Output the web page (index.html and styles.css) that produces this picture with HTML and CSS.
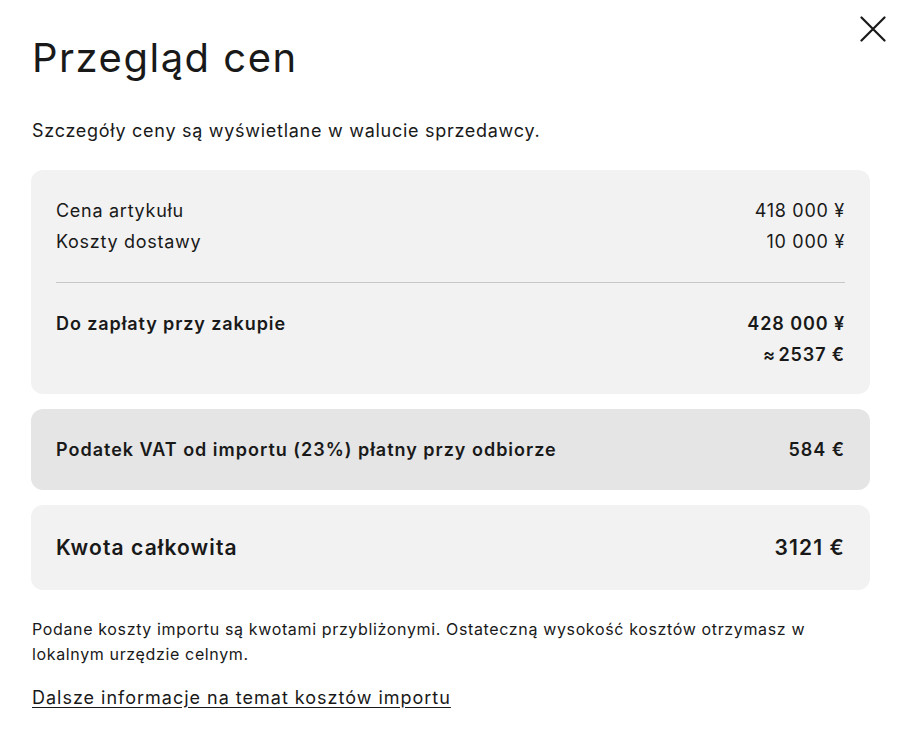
FILE: index.html
```html
<!DOCTYPE html>
<html lang="pl">
<head>
<meta charset="utf-8">
<title>Przegląd cen</title>
<link rel="stylesheet" href="styles.css">
</head>
<body>
<div class="dialog">
  <button class="close" aria-label="Zamknij">
    <svg width="26" height="26" viewBox="0 0 26 26"><path d="M1.5 1.5 L24.5 24.5 M24.5 1.5 L1.5 24.5" stroke="#191919" stroke-width="2.2" stroke-linecap="round" fill="none"/></svg>
  </button>
  <h1 class="title">Przegląd cen</h1>
  <p class="subtitle">Szczegóły ceny są wyświetlane w walucie sprzedawcy.</p>

  <section class="card card-light card-summary">
    <div class="row"><span>Cena artykułu</span><span>418&nbsp;000&nbsp;¥</span></div>
    <div class="row"><span>Koszty dostawy</span><span>10&nbsp;000&nbsp;¥</span></div>
    <hr class="divider">
    <div class="row row-bold"><span>Do zapłaty przy zakupie</span><span class="amounts"><span>428&nbsp;000&nbsp;¥</span><span>≈&#8202;2537&nbsp;€</span></span></div>
  </section>

  <section class="card card-dark">
    <div class="row row-semi"><span>Podatek VAT od importu (23%) płatny przy odbiorze</span><span>584&nbsp;€</span></div>
  </section>

  <section class="card card-light card-total">
    <div class="row row-total"><span>Kwota całkowita</span><span>3121&nbsp;€</span></div>
  </section>

  <p class="note">Podane koszty importu są kwotami przybliżonymi. Ostateczną wysokość kosztów otrzymasz w lokalnym urzędzie celnym.</p>
  <a class="link" href="#">Dalsze informacje na temat kosztów importu</a>
</div>
</body>
</html>
```

FILE: styles.css
```css
* { box-sizing: border-box; }
html, body { margin: 0; padding: 0; background: #fff; }
body {
  font-family: Inter, "Open Sans", "Liberation Sans", sans-serif;
  color: #191919;
  letter-spacing: 0.045em;
}
.dialog {
  position: relative;
  padding: 26px 31px 40px 31px;
  width: 901px;
}
.close {
  position: absolute;
  top: 16px;
  right: 15px;
  width: 26px;
  height: 26px;
  padding: 0;
  border: 0;
  background: none;
  display: flex;
}
.title {
  margin: 0;
  font-size: 40px;
  font-weight: 400;
  line-height: 64px;
  letter-spacing: 1.5px;
  padding-left: 1px;
}
.subtitle {
  margin: 27px 0 0 1px;
  font-size: 18px;
  line-height: 28px;
}
.card {
  border-radius: 12px;
  padding: 25px;
  margin-top: 25px;
}
.card + .card { margin-top: 15px; }
.card-light { background: #f2f2f2; }
.card-dark { background: #e5e5e5; height: 81px; }
.card-summary { padding: 25px 25px 24px; }
.row {
  display: flex;
  justify-content: space-between;
  align-items: flex-start;
  font-size: 18px;
  line-height: 31px;
}
.row-bold { font-weight: 600; letter-spacing: 0.05em; }
.amounts { display: flex; flex-direction: column; align-items: flex-end; }
.divider {
  border: 0;
  height: 1px;
  background: #c7c7c7;
  margin: 25px 0 25px;
}
.row-semi { font-weight: 600; letter-spacing: 0.055em; }
.card-total { height: 85px; }
.row-total { font-size: 21px; font-weight: 600; line-height: 35px; letter-spacing: 0.053em; }
.note {
  margin: 27px 0 0 1px;
  font-size: 16px;
  line-height: 25px;
  letter-spacing: 0.04em;
}
.link {
  display: inline-block;
  margin: 18px 0 0 1px;
  font-size: 18px;
  line-height: 26px;
  color: #191919;
  text-decoration: underline;
  text-underline-offset: 3px;
  letter-spacing: 0.055em;
}
```
